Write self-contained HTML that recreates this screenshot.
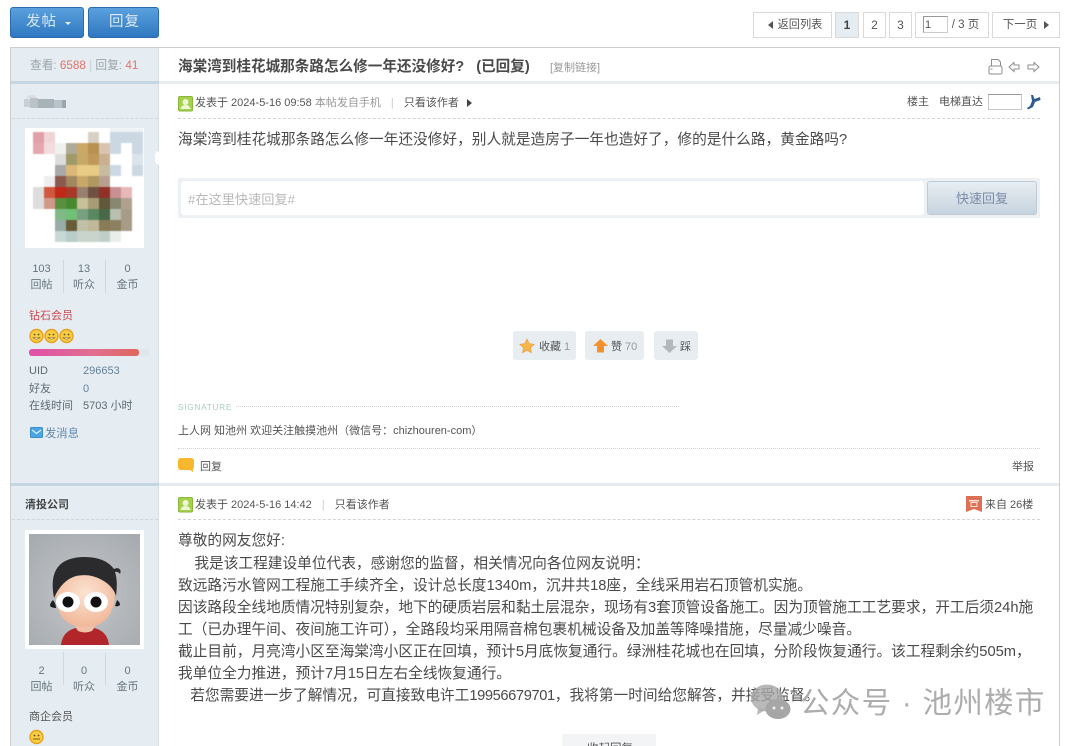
<!DOCTYPE html>
<html lang="zh"><head><meta charset="utf-8"><title>海棠湾到桂花城那条路怎么修一年还没修好?</title>
<style>
html,body{margin:0;padding:0;width:1080px;height:746px;overflow:hidden;background:#fff}
#w{position:absolute;left:0;top:0;width:1080px;height:746px;overflow:hidden;background:#fff;filter:blur(.35px);font-family:"Liberation Sans","Noto Sans CJK SC",sans-serif;font-size:11px;color:#555}
.a{position:absolute;white-space:nowrap;line-height:16px}
.b{position:absolute;box-sizing:border-box}
.pg{position:absolute;box-sizing:border-box;top:12px;height:26px;border:1px solid #d9d9d9;background:#fff;text-align:center;line-height:24px;font-size:11px;color:#555;white-space:nowrap}
.dash{position:absolute;height:0;border-top:1px dashed #d4d4d4}
.c{text-align:center;color:#66757f}
.u{color:#5c6a72}
.vl{position:absolute;width:1px;background:#cfd9df}
.vote{position:absolute;top:331px;height:29px;background:#e8edf2;border-radius:3px;box-sizing:border-box;line-height:32px;font-size:11px;color:#555;white-space:nowrap}
.post{position:absolute;left:178px;font-size:14.7px;color:#4a4a4a;line-height:22px;white-space:nowrap}
</style></head><body><div id="w">

<div class="b" style="left:10px;top:7px;width:74px;height:31px;border:1px solid #2a6cae;border-radius:3px;background:linear-gradient(#5aa0de,#2f78c0)"></div>
<div class="a" style="left:26px;top:14px;color:#dce9f5;font-size:14.5px;letter-spacing:1px">发帖</div>
<div class="b" style="left:65px;top:22px;border:3px solid transparent;border-top:3px solid #eaf3fb"></div>
<div class="b" style="left:88px;top:7px;width:71px;height:31px;border:1px solid #2a6cae;border-radius:3px;background:linear-gradient(#5aa0de,#2f78c0)"></div>
<div class="a" style="left:109px;top:14px;color:#dce9f5;font-size:14.5px;letter-spacing:1px">回复</div>

<div class="pg" style="left:753px;width:79px;padding-left:15px;font-size:11.2px">返回列表</div>
<div class="b" style="left:768px;top:21px;border:4px solid transparent;border-right:5px solid #555;border-left:0"></div>
<div class="pg" style="left:835px;width:24px;background:#e5edf2;font-weight:bold;font-size:12px;color:#444">1</div>
<div class="pg" style="left:863px;width:23px;font-size:12px">2</div>
<div class="pg" style="left:889px;width:23px;font-size:12px">3</div>
<div class="pg" style="left:915px;width:74px;padding-left:27px;font-size:11.5px">/ 3 页</div>
<div class="b" style="left:923px;top:16px;width:25px;height:17px;border:1px solid #ccc;border-left-color:#999;border-top-color:#999;background:#fff;font-size:11px;line-height:16px;padding-left:1px">1</div>
<div class="pg" style="left:992px;width:68px;padding-right:12px;font-size:11.5px">下一页</div>
<div class="b" style="left:1044px;top:21px;border:4px solid transparent;border-left:5px solid #555;border-right:0"></div>

<div class="b" style="left:10px;top:47px;width:1050px;height:710px;border:1px solid #cdcdcd"></div>
<div class="b" style="left:11px;top:48px;width:148px;height:698px;background:#e5edf2;border-right:1px solid #d6dfe5"></div>
<div class="b" style="left:11px;top:81px;width:148px;height:3px;background:#c5d6e3"></div>
<div class="b" style="left:159px;top:81px;width:900px;height:3px;background:#e8ecee"></div>
<div class="b" style="left:11px;top:483px;width:148px;height:3px;background:#c5d6e3"></div>
<div class="b" style="left:159px;top:483px;width:900px;height:3px;background:#e8ecee"></div>

<div class="a" style="left:30px;top:58px;color:#9aa5ac;font-size:11.7px">查看: <span style="color:#e2736c">6588</span> <span style="color:#c5ced4">|</span> 回复: <span style="color:#e2736c">41</span></div>
<div class="a" style="left:178px;top:59px;font-size:14.6px;font-weight:bold;color:#4a4a4a">海棠湾到桂花城那条路怎么修一年还没修好?<span style="margin-left:12px">(已回复)</span></div>
<div class="a" style="left:550px;top:60px;font-size:11px;color:#999">[复制链接]</div>

<svg class="b" style="left:988px;top:58px" width="52" height="18" viewBox="0 0 52 18" fill="none" stroke="#8d8d8d" stroke-width="1">
<path d="M3.500 8V1.500h6.500L12.500 4v4M2.500 8h10a1.500 1.500 0 0 1 1.500 1.500v5a1.500 1.500 0 0 1-1.500 1.500h-10A1.500 1.500 0 0 1 1 14.500v-5A1.500 1.500 0 0 1 2.500 8zM2.500 11h2"/>
<path d="M21 9l5-4.500V7h5v4h-5v2.500z"/><path d="M51 9l-5-4.500V7h-6v4h6v2.500z"/></svg>

<!-- post 1 left -->
<svg class="b" style="left:22px;top:92px" width="46" height="20"><rect x="2" y="7" width="6" height="8" fill="#c8d1d7"/><rect x="8" y="6" width="8" height="10" fill="#bcc3c8"/><rect x="16" y="7" width="8" height="9" fill="#a8b2b9"/><rect x="24" y="7" width="8" height="9" fill="#a8b2b9"/><rect x="32" y="8" width="8" height="8" fill="#b8c2c9"/><rect x="40" y="8" width="4" height="8" fill="#9aa5ac"/><path d="M4 6q3-5 10-2v2H4z" fill="#d7dfe5"/></svg>
<div class="dash" style="left:12px;top:118px;width:146px;border-color:#ccd6dc"></div>

<div class="b" style="left:25px;top:128px;width:119px;height:120px;background:#fff"></div>
<svg class="b" style="left:25px;top:128px;filter:blur(.6px)" width="140" height="120" viewBox="25 128 140 120" shape-rendering="crispEdges">
<g>
<rect x="110" y="126" width="33" height="11" fill="#eef2f5"/>
<rect x="110" y="132" width="33" height="22" fill="#cbd8e3"/><rect x="121" y="143" width="11" height="22" fill="#fff"/>
<rect x="132" y="154" width="11" height="11" fill="#dbe4ea"/>
<rect x="110" y="165" width="11" height="11" fill="#ccd9e4"/><rect x="132" y="165" width="11" height="11" fill="#ccd9e4"/>
<rect x="33" y="132" width="11" height="11" fill="#dfa0a8"/><rect x="44" y="132" width="11" height="11" fill="#f0d4d6"/><rect x="88" y="132" width="11" height="11" fill="#d8d0c4"/>
<rect x="33" y="143" width="11" height="11" fill="#e5a8b0"/><rect x="44" y="143" width="11" height="11" fill="#f2dcdc"/><rect x="55" y="143" width="11" height="11" fill="#f0f0ee"/><rect x="66" y="143" width="11" height="11" fill="#b0ab98"/><rect x="77" y="143" width="11" height="11" fill="#cca868"/><rect x="88" y="143" width="11" height="11" fill="#b89050"/><rect x="99" y="143" width="11" height="11" fill="#d8c4b0"/>
<rect x="55" y="154" width="11" height="11" fill="#ddd"/><rect x="66" y="154" width="11" height="11" fill="#a09a68"/><rect x="77" y="154" width="11" height="11" fill="#c8a868"/><rect x="88" y="154" width="11" height="11" fill="#c0985a"/><rect x="99" y="154" width="11" height="11" fill="#c8b090"/>
<rect x="55" y="165" width="11" height="11" fill="#aaa"/><rect x="66" y="165" width="11" height="11" fill="#dcb878"/><rect x="77" y="165" width="22" height="11" fill="#e8cb84"/><rect x="99" y="165" width="11" height="11" fill="#c8bca0"/>
<rect x="44" y="176" width="11" height="11" fill="#eee"/><rect x="55" y="176" width="11" height="11" fill="#8a5a50"/><rect x="66" y="176" width="11" height="11" fill="#a08860"/><rect x="77" y="176" width="11" height="11" fill="#c8a868"/><rect x="88" y="176" width="11" height="11" fill="#b09860"/><rect x="99" y="176" width="11" height="11" fill="#b8a090"/>
<rect x="33" y="187" width="11" height="11" fill="#ddd"/><rect x="44" y="187" width="11" height="11" fill="#d05840"/><rect x="55" y="187" width="11" height="11" fill="#c02818"/><rect x="66" y="187" width="11" height="11" fill="#a83828"/><rect x="77" y="187" width="11" height="11" fill="#988070"/><rect x="88" y="187" width="11" height="11" fill="#705040"/><rect x="99" y="187" width="11" height="11" fill="#903028"/><rect x="110" y="187" width="11" height="11" fill="#c89090"/><rect x="121" y="187" width="11" height="11" fill="#e8b8b8"/>
<rect x="33" y="198" width="11" height="11" fill="#ddd"/><rect x="44" y="198" width="11" height="11" fill="#d09888"/><rect x="55" y="198" width="11" height="11" fill="#589040"/><rect x="66" y="198" width="11" height="11" fill="#488830"/><rect x="77" y="198" width="11" height="11" fill="#c8c098"/><rect x="88" y="198" width="11" height="11" fill="#a89c78"/><rect x="99" y="198" width="11" height="11" fill="#605838"/><rect x="110" y="198" width="11" height="11" fill="#888870"/><rect x="121" y="198" width="11" height="11" fill="#b0a090"/>
<rect x="55" y="209" width="11" height="11" fill="#80b888"/><rect x="66" y="209" width="11" height="11" fill="#70c078"/><rect x="77" y="209" width="11" height="11" fill="#78a080"/><rect x="88" y="209" width="11" height="11" fill="#588860"/><rect x="99" y="209" width="11" height="11" fill="#486848"/><rect x="110" y="209" width="11" height="11" fill="#b8c0b0"/><rect x="121" y="209" width="11" height="11" fill="#a89c88"/>
<rect x="55" y="220" width="11" height="11" fill="#98aca8"/><rect x="66" y="220" width="11" height="11" fill="#685c38"/><rect x="77" y="220" width="11" height="11" fill="#c0c0a8"/><rect x="88" y="220" width="11" height="11" fill="#c0b898"/><rect x="99" y="220" width="11" height="11" fill="#887c58"/><rect x="110" y="220" width="11" height="11" fill="#8c8060"/><rect x="121" y="220" width="11" height="11" fill="#a89c88"/>
<rect x="55" y="231" width="11" height="11" fill="#c8d8d4"/><rect x="66" y="231" width="11" height="11" fill="#b8ccc8"/><rect x="77" y="231" width="22" height="11" fill="#c8d4cc"/><rect x="99" y="231" width="11" height="11" fill="#c0d0c8"/><rect x="110" y="231" width="11" height="11" fill="#e8eeea"/>
</g></svg>
<div class="b" style="left:155px;top:151px;width:9px;height:14px;background:#fff;border-radius:5px"></div>

<div class="a c" style="left:25px;top:261px;width:33px">103</div><div class="a c" style="left:25px;top:277px;width:33px">回帖</div>
<div class="a c" style="left:68px;top:261px;width:32px">13</div><div class="a c" style="left:68px;top:277px;width:32px">听众</div>
<div class="a c" style="left:111px;top:261px;width:33px">0</div><div class="a c" style="left:111px;top:277px;width:33px">金币</div>
<div class="vl" style="left:63px;top:260px;height:33px"></div><div class="vl" style="left:105px;top:260px;height:33px"></div>

<div class="a" style="left:29px;top:308px;color:#c9484f;font-size:11px">钻石会员</div>
<svg class="b" style="left:29px;top:328px" width="46" height="16" viewBox="0 0 46 16"><g id="s"><circle cx="7.500" cy="8" r="6.500" fill="#f7cf45" stroke="#e8a020" stroke-width="1.400"/><circle cx="5.500" cy="6.500" r=".9" fill="#6b4a10"/><circle cx="9.500" cy="6.500" r=".9" fill="#6b4a10"/><path d="M4 9.500h7q-3.500 3.500-7 0z" fill="#fff6d8" stroke="#8a5a10" stroke-width=".6"/></g><use href="#s" x="15"/><use href="#s" x="30"/></svg>
<div class="b" style="left:29px;top:349px;width:120px;height:7px;background:#e0e6ea;border-radius:2px"></div>
<div class="b" style="left:29px;top:349px;width:110px;height:7px;background:linear-gradient(90deg,#e14fa8,#e0708f 60%,#e0665c);border-radius:3px"></div>

<div class="a u" style="left:29px;top:363px">UID</div><div class="a" style="left:83px;top:363px;color:#66809a">296653</div>
<div class="a u" style="left:29px;top:381px">好友</div><div class="a" style="left:83px;top:381px;color:#66809a">0</div>
<div class="a u" style="left:29px;top:398px">在线时间</div><div class="a u" style="left:83px;top:398px">5703 小时</div>
<svg class="b" style="left:30px;top:427px" width="13" height="12"><rect x=".5" y=".5" width="12" height="10" rx="1" fill="#4ba6e4" stroke="#3d8fcb"/><path d="M2 3l4.500 3.500L11 3" fill="none" stroke="#fff"/></svg>
<div class="a" style="left:45px;top:426px;color:#5e87ad;font-size:11.3px">发消息</div>

<!-- post 1 right -->
<svg class="b" style="left:178px;top:96px" width="15" height="16"><rect x=".5" y=".5" width="14" height="14.500" rx="1.500" fill="#a5d24c" stroke="#8ab53a"/><circle cx="7.500" cy="6" r="3" fill="#f0f5d8"/><path d="M2.500 13q1-4 5-4t5 4z" fill="#f0f5d8"/></svg>
<div class="a" style="left:195px;top:95px">发表于 2024-5-16 09:58 <span style="color:#999">本帖发自手机</span> <span style="color:#ccc;margin:0 7px">|</span> 只看该作者</div>
<div class="b" style="left:467px;top:99px;border:4px solid transparent;border-left:5px solid #444;border-right:0"></div>
<div class="a" style="left:907px;top:94px">楼主</div><div class="a" style="left:939px;top:94px">电梯直达</div>
<div class="b" style="left:988px;top:94px;width:34px;height:16px;border:1px solid #c8c8c8;border-top-color:#999;background:#fff"></div>
<svg class="b" style="left:1026px;top:94px" width="16" height="16"><path d="M5 1h2l1.500 4L14 3l.5 3-5.500 2-2 5-5 2.500L1 14l3-2 2-5z" fill="#2e5b8c"/></svg>
<div class="dash" style="left:178px;top:118px;width:862px"></div>
<div class="a" style="left:178px;top:130px;font-size:14.7px;color:#4a4a4a;line-height:20px">海棠湾到桂花城那条路怎么修一年还没修好，别人就是造房子一年也造好了，修的是什么路，黄金路吗?</div>

<div class="b" style="left:178px;top:178px;width:862px;height:40px;background:#edf1f4"></div>
<div class="b" style="left:181px;top:181px;width:743px;height:34px;background:#fff;border-radius:3px"></div>
<div class="a" style="left:188px;top:192px;font-size:13.2px;color:#b9b9b9">#在这里快速回复#</div>
<div class="b" style="left:927px;top:181px;width:110px;height:34px;border:1px solid #bfccd6;border-radius:3px;background:linear-gradient(#e8eef3,#c6d3de)"></div>
<div class="a" style="left:956px;top:191px;font-size:13px;color:#7c8aa8">快速回复</div>

<div class="vote" style="left:513px;width:63px;padding-left:26px">收藏<span style="color:#999"> 1</span></div>
<svg class="b" style="left:519px;top:338px" width="16" height="16"><path d="M8 1l2.200 4.600 5 .7-3.600 3.500.9 5L8 12.400l-4.500 2.400.9-5L.8 6.300l5-.7z" fill="#f5b54b" stroke="#ee9a3a" stroke-width=".6"/></svg>
<div class="vote" style="left:585px;width:59px;padding-left:26px">赞<span style="color:#999"> 70</span></div>
<svg class="b" style="left:593px;top:339px" width="15" height="14"><path d="M7.500 0L15 7h-4v6.500H4V7H0z" fill="#f4912e"/></svg>
<div class="vote" style="left:654px;width:44px;padding-left:26px">踩</div>
<svg class="b" style="left:662px;top:339px" width="15" height="14"><path d="M7.500 14L15 7h-4V.5H4V7H0z" fill="#b3b8bd"/></svg>

<div class="a" style="left:178px;top:399px;font-size:8.3px;color:#a7cfc0;letter-spacing:.7px">SIGNATURE</div>
<div class="dash" style="left:236px;top:406px;width:443px;border-top-style:dotted"></div>
<div class="a" style="left:178px;top:423px;color:#555;font-size:11px">上人网 知池州 欢迎关注触摸池州（微信号：chizhouren-com）</div>
<div class="dash" style="left:178px;top:448px;width:862px;border-top-style:dotted"></div>
<svg class="b" style="left:178px;top:457px" width="17" height="16"><path d="M3 1h10q3 0 3 3v5q0 2-1 3v3l-3-2H3q-3 0-3-3V4q0-3 3-3z" fill="#f7b72e"/></svg>
<div class="a" style="left:200px;top:459px">回复</div>
<div class="a" style="left:1012px;top:459px">举报</div>

<!-- post 2 -->
<div class="a" style="left:25px;top:497px;font-weight:bold;color:#444;font-size:11px">清投公司</div>
<div class="dash" style="left:12px;top:519px;width:146px;border-color:#ccd6dc"></div>
<svg class="b" style="left:25px;top:530px" width="120" height="120" viewBox="0 0 120 120">
<defs><radialGradient id="g" cx=".5" cy=".55" r=".7"><stop offset="0" stop-color="#c4c7ca"/><stop offset="1" stop-color="#a6abaf"/></radialGradient><radialGradient id="f" cx=".5" cy=".35" r=".7"><stop offset="0" stop-color="#fbe3d2"/><stop offset="1" stop-color="#f0b494"/></radialGradient></defs>
<rect width="119" height="119" fill="#fff"/><rect x="4" y="4" width="111" height="111" fill="url(#g)"/>
<path d="M36 115q2-18 24-18t24 18z" fill="#b0262b"/><path d="M49 95h22l-4 6q-7 3-14 0z" fill="#f0c0a8"/>
<path d="M31 62q0 35 29 35t30-35q0-18-30-18T31 62z" fill="url(#f)"/>
<path d="M29 68q-8-41 31-41 20 0 29 12l3-1q5 1 3 6-2-3-5-2 3 9 1 24-3-10-14-16-12-7-26-4-14 4-22 22z" fill="#2b2b2d"/>
<path d="M28 70q-3 3-3 6 2 2 6 2 0-4-3-8zM92 70l-2 6q3 1 5-1 0-3-3-5z" fill="#1e1e20"/>
<ellipse cx="43" cy="72" rx="12" ry="10" fill="#fff"/><ellipse cx="71" cy="72" rx="12" ry="10" fill="#fff"/>
<circle cx="43" cy="72" r="5.500" fill="#111"/><circle cx="71" cy="72" r="5.500" fill="#111"/>
</svg>
<div class="a c" style="left:25px;top:663px;width:33px">2</div><div class="a c" style="left:25px;top:679px;width:33px">回帖</div>
<div class="a c" style="left:68px;top:663px;width:32px">0</div><div class="a c" style="left:68px;top:679px;width:32px">听众</div>
<div class="a c" style="left:111px;top:663px;width:33px">0</div><div class="a c" style="left:111px;top:679px;width:33px">金币</div>
<div class="vl" style="left:63px;top:652px;height:33px"></div><div class="vl" style="left:105px;top:652px;height:33px"></div>
<div class="a" style="left:29px;top:709px;color:#555;font-size:11px">商企会员</div>
<svg class="b" style="left:29px;top:729px" width="16" height="16" viewBox="0 0 16 16"><circle cx="7.500" cy="8" r="6.500" fill="#f7cf45" stroke="#e8a020" stroke-width="1.400"/><circle cx="5.500" cy="6.500" r=".9" fill="#6b4a10"/><circle cx="9.500" cy="6.500" r=".9" fill="#6b4a10"/><path d="M4 10h7" stroke="#8a5a10"/></svg>

<svg class="b" style="left:178px;top:497px" width="15" height="16"><rect x=".5" y=".5" width="14" height="14.500" rx="1.500" fill="#a5d24c" stroke="#8ab53a"/><circle cx="7.500" cy="6" r="3" fill="#f0f5d8"/><path d="M2.500 13q1-4 5-4t5 4z" fill="#f0f5d8"/></svg>
<div class="a" style="left:195px;top:497px">发表于 2024-5-16 14:42 <span style="color:#ccc;margin:0 7px">|</span> 只看该作者</div>
<svg class="b" style="left:966px;top:496px" width="16" height="17"><path d="M0 0h16v16l-8-3-8 3z" fill="#dd6f55"/><rect x="3" y="4" width="10" height="1.500" fill="#fbe3d8"/><rect x="5" y="6.500" width="6" height="4" fill="none" stroke="#fbe3d8"/></svg>
<div class="a" style="left:985px;top:497px">来自 26楼</div>
<div class="dash" style="left:178px;top:519px;width:862px"></div>

<div class="post" style="top:530px">尊敬的网友您好:</div>
<div class="post" style="top:553px">&nbsp; &nbsp; 我是该工程建设单位代表，感谢您的监督，相关情况向各位网友说明：</div>
<div class="post" style="top:575px">致远路污水管网工程施工手续齐全，设计总长度1340m，沉井共18座，全线采用岩石顶管机实施。</div>
<div class="post" style="top:597px">因该路段全线地质情况特别复杂，地下的硬质岩层和黏土层混杂，现场有3套顶管设备施工。因为顶管施工工艺要求，开工后须24h施</div>
<div class="post" style="top:619px">工（已办理午间、夜间施工许可），全路段均采用隔音棉包裹机械设备及加盖等降噪措施，尽量减少噪音。</div>
<div class="post" style="top:641px">截止目前，月亮湾小区至海棠湾小区正在回填，预计5月底恢复通行。绿洲桂花城也在回填，分阶段恢复通行。该工程剩余约505m，</div>
<div class="post" style="top:663px">我单位全力推进，预计7月15日左右全线恢复通行。</div>
<div class="post" style="top:685px">&nbsp; &nbsp;若您需要进一步了解情况，可直接致电许工<span style="letter-spacing:-.4px">19956679701</span>，我将第一时间给您解答，并接受监督。</div>

<div class="b" style="left:562px;top:734px;width:94px;height:20px;background:#f2f4f6"></div>
<div class="a" style="left:587px;top:741px;font-size:11.5px;color:#555">收起回复</div>

<!-- watermark -->
<svg class="b" style="left:750px;top:684px" width="42" height="36" viewBox="0 0 42 36"><ellipse cx="17" cy="14" rx="16" ry="13.500" fill="#a8a8a8" opacity=".8"/><path d="M8 24l-1 7 8-5z" fill="#a8a8a8" opacity=".8"/><ellipse cx="28" cy="25" rx="12.500" ry="10" fill="#a6a6a6"/><circle cx="24" cy="24" r="1.500" fill="#eee"/><circle cx="32" cy="24" r="1.500" fill="#eee"/></svg>
<div class="a" style="left:800px;top:684px;font-size:29.5px;line-height:40px;color:#adadad;letter-spacing:1.3px">公众号 · 池州楼市</div>
</div></body></html>
